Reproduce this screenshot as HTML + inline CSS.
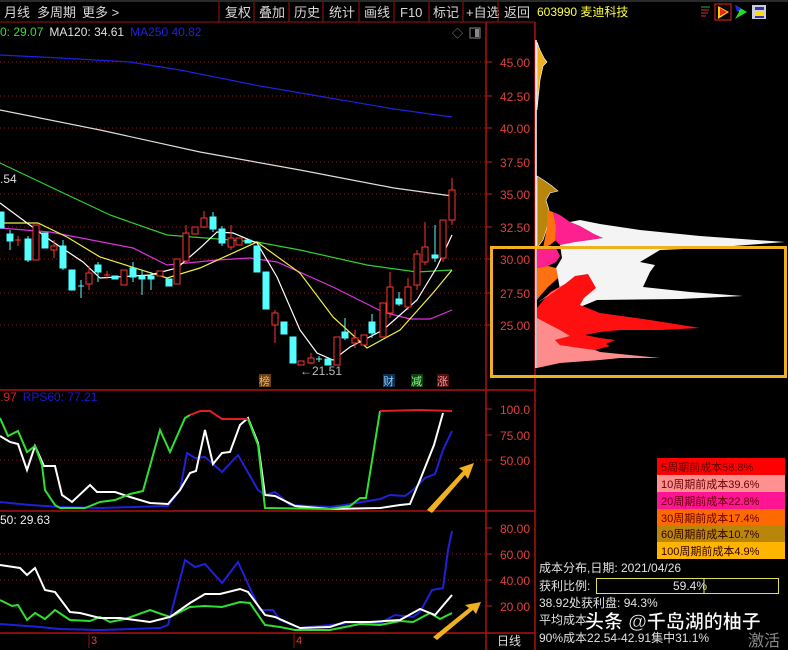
<!DOCTYPE html>
<html><head><meta charset="utf-8"><style>
body{margin:0;background:#000;width:788px;height:650px;overflow:hidden;font-family:"Liberation Sans","Noto Sans CJK SC",sans-serif}
svg{display:block}
text{font-family:"Liberation Sans","Noto Sans CJK SC",sans-serif}
</style></head><body>
<svg width="788" height="650" viewBox="0 0 788 650" xmlns="http://www.w3.org/2000/svg">
<rect width="788" height="650" fill="#000"/>
<line x1="0" y1="1" x2="788" y2="1" fill="none" stroke="#555"/>
<line x1="0" y1="22" x2="535" y2="22" stroke="#a01010"/>
<g fill="#d8d8d8" font-size="13">
<text x="4" y="17">月线</text><text x="37" y="17">多周期</text><text x="82" y="17">更多 &gt;</text>
<text x="225" y="17">复权</text><text x="259" y="17">叠加</text><text x="294" y="17">历史</text><text x="329" y="17">统计</text><text x="364" y="17">画线</text><text x="400" y="17">F10</text><text x="433" y="17">标记</text><text x="466" y="17">+自选</text><text x="504" y="17">返回</text>
</g>
<g stroke="#a01010"><line x1="219" y1="2" x2="219" y2="22"/><line x1="254" y1="2" x2="254" y2="22"/><line x1="289" y1="2" x2="289" y2="22"/><line x1="323" y1="2" x2="323" y2="22"/><line x1="359" y1="2" x2="359" y2="22"/><line x1="394" y1="2" x2="394" y2="22"/><line x1="429" y1="2" x2="429" y2="22"/><line x1="463" y1="2" x2="463" y2="22"/><line x1="498" y1="2" x2="498" y2="22"/></g>
<text x="537" y="16" fill="#ffff40" font-size="12">603990 麦迪科技</text>
<g><line x1="701" y1="7" x2="710" y2="7" stroke="#3a3"/><line x1="701" y1="10" x2="709" y2="10" stroke="#c33"/><line x1="701" y1="13" x2="708" y2="13" stroke="#c33"/><line x1="701" y1="16" x2="706" y2="16" stroke="#c33"/>
<rect x="715" y="4" width="16" height="16" fill="none" stroke="#e22"/><polygon points="718,6 729,12 718,19" fill="#ffd000"/><polygon points="720,8 727,12 720,16" fill="#e22"/>
<polygon points="735,5 747,12 735,19 739,12" fill="#22dd22"/><polygon points="735,5 741,9 737,12" fill="#22f"/>
<rect x="752" y="5" width="14" height="14" fill="#ccd"/><rect x="755" y="7" width="9" height="3" fill="#33a"/><rect x="755" y="12" width="9" height="3" fill="#fd0"/><rect x="755" y="16" width="9" height="2" fill="#33a"/></g>

<g stroke="#b01010" stroke-width="1.5">
<line x1="486" y1="22" x2="486" y2="650"/><line x1="535" y1="22" x2="535" y2="650"/>
<line x1="0" y1="390" x2="535" y2="390"/><line x1="0" y1="511" x2="535" y2="511"/><line x1="0" y1="633" x2="535" y2="633"/>
</g>
<g stroke="#901818" stroke-dasharray="1,3">
<line x1="0" y1="62" x2="486" y2="62"/><line x1="0" y1="96" x2="486" y2="96"/><line x1="0" y1="128" x2="486" y2="128"/><line x1="0" y1="162" x2="486" y2="162"/><line x1="0" y1="194" x2="486" y2="194"/><line x1="0" y1="227" x2="486" y2="227"/><line x1="0" y1="259" x2="486" y2="259"/><line x1="0" y1="293" x2="486" y2="293"/><line x1="0" y1="325" x2="486" y2="325"/>
<line x1="0" y1="460" x2="486" y2="460"/><line x1="0" y1="554" x2="486" y2="554"/><line x1="0" y1="580" x2="486" y2="580"/>
</g>
<g stroke="#c02020"><line x1="486" y1="62" x2="492" y2="62"/><line x1="486" y1="96" x2="492" y2="96"/><line x1="486" y1="128" x2="492" y2="128"/><line x1="486" y1="162" x2="492" y2="162"/><line x1="486" y1="194" x2="492" y2="194"/><line x1="486" y1="227" x2="492" y2="227"/><line x1="486" y1="259" x2="492" y2="259"/><line x1="486" y1="293" x2="492" y2="293"/><line x1="486" y1="325" x2="492" y2="325"/><line x1="486" y1="409" x2="492" y2="409"/><line x1="486" y1="435" x2="492" y2="435"/><line x1="486" y1="460" x2="492" y2="460"/><line x1="486" y1="528" x2="492" y2="528"/><line x1="486" y1="554" x2="492" y2="554"/><line x1="486" y1="580" x2="492" y2="580"/><line x1="486" y1="606" x2="492" y2="606"/></g>
<g fill="#e04040" font-size="12">
<text x="500" y="67">45.00</text><text x="500" y="101">42.50</text><text x="500" y="133">40.00</text><text x="500" y="167">37.50</text><text x="500" y="199">35.00</text><text x="500" y="232">32.50</text><text x="500" y="264">30.00</text><text x="500" y="298">27.50</text><text x="500" y="330">25.00</text>
<text x="500" y="414">100.0</text><text x="500" y="440">75.00</text><text x="500" y="465">50.00</text>
<text x="500" y="533">80.00</text><text x="500" y="559">60.00</text><text x="500" y="585">40.00</text><text x="500" y="611">20.00</text>
</g>
<text x="497" y="645" fill="#ddd" font-size="12">日线</text>
<g fill="#e04040" font-size="11"><text x="91" y="644">3</text><text x="296" y="644">4</text></g>
<g stroke="#a01010"><line x1="89" y1="633" x2="89" y2="648"/><line x1="294" y1="633" x2="294" y2="648"/></g>

<text x="0" y="36" font-size="12"><tspan fill="#3fd83f">0: 29.07</tspan><tspan fill="#e0e0e0" dx="6">MA120: 34.61</tspan><tspan fill="#2020e0" dx="6">MA250  40.82</tspan></text>
<text x="452" y="37" fill="#888" font-size="11">◇</text><rect x="470" y="28" width="10" height="10" fill="none" stroke="#888"/><rect x="475" y="29" width="4" height="8" fill="#888"/>
<text x="0" y="183" fill="#ddd" font-size="12">.54</text>
<text x="0" y="401" font-size="12"><tspan fill="#e02020">.97</tspan><tspan fill="#1a1ad0" dx="6">RPS60: 77.21</tspan></text>
<text x="0" y="524" fill="#eee" font-size="12">50: 29.63</text>

<g fill="none" stroke-width="1.2">
<polyline stroke="#2020e0" points="0,55 60,58 130,62 180,70 260,86 330,98 394,109 452,117"/>
<polyline stroke="#ddd" points="0,110 100,130 200,152 300,170 394,188 452,196"/>
<polyline stroke="#30d030" points="0,163 57,190 110,215 167,235 257,242 300,250 367,265 417,272 452,270"/>
<polyline stroke="#e030e0" points="0,228 50,232 133,248 167,265 217,260 250,258 277,262 333,287 383,312 410,319 430,319 452,310"/>
<polyline stroke="#f0f040" points="0,223 38,223 67,237 100,257 167,278 200,268 257,242 300,273 333,317 367,348 400,330 433,293 452,270"/>
<polyline stroke="#fff" points="0,203 50,240 83,262 100,278 150,275 177,268 200,248 217,232 233,233 257,243 277,277 300,330 317,353 333,360 350,347 383,330 417,300 437,267 452,235"/>
</g>
<g stroke-width="1">
<g stroke="#54ffff" fill="#54ffff">
<rect x="-2" y="212" width="6" height="16"/>
<line x1="10" y1="230" x2="10" y2="250"/><rect x="7" y="234" width="6" height="7"/>
<line x1="28" y1="236" x2="28" y2="262"/><rect x="25" y="239" width="6" height="21"/>
<rect x="42" y="233" width="6" height="15"/>
<line x1="63" y1="240" x2="63" y2="270"/><rect x="60" y="246" width="6" height="22"/>
<rect x="69" y="270" width="6" height="20"/>
<line x1="81" y1="280" x2="81" y2="298"/><line x1="78" y1="286" x2="84" y2="286"/>
<line x1="98" y1="262" x2="98" y2="282"/><rect x="95" y="265" width="6" height="7"/>
<rect x="112" y="276" width="6" height="3"/>
<line x1="133" y1="262" x2="133" y2="282"/><rect x="130" y="268" width="6" height="9"/>
<line x1="142" y1="270" x2="142" y2="295"/><rect x="139" y="276" width="6" height="3"/>
<line x1="151" y1="272" x2="151" y2="290"/><rect x="148" y="276" width="6" height="3"/>
<rect x="166" y="279" width="6" height="7"/>
<line x1="213" y1="212" x2="213" y2="232"/><rect x="210" y="217" width="6" height="12"/>
<line x1="222" y1="226" x2="222" y2="246"/><rect x="219" y="229" width="6" height="14"/>
<rect x="245" y="240" width="6" height="3"/>
<rect x="254" y="246" width="6" height="26"/>
<rect x="263" y="272" width="6" height="37"/>
<rect x="281" y="322" width="6" height="12"/>
<rect x="290" y="337" width="6" height="26"/>
<line x1="319" y1="356" x2="319" y2="362"/><line x1="316" y1="359" x2="322" y2="359"/>
<rect x="325" y="359" width="6" height="6"/>
<line x1="345" y1="318" x2="345" y2="340"/><rect x="342" y="332" width="6" height="6"/>
<line x1="372" y1="314" x2="372" y2="338"/><rect x="369" y="322" width="6" height="11"/>
<line x1="399" y1="292" x2="399" y2="306"/><rect x="396" y="299" width="6" height="5"/>
<line x1="435" y1="225" x2="435" y2="262"/><rect x="432" y="255" width="6" height="3"/>
</g>
<g stroke="#ff3232" fill="#000">
<line x1="18" y1="236" x2="18" y2="246"/><line x1="15" y1="240" x2="21" y2="240"/>
<rect x="33" y="225" width="6" height="35"/>
<line x1="54" y1="240" x2="54" y2="258"/><rect x="51" y="246" width="6" height="4"/>
<line x1="89" y1="266" x2="89" y2="290"/><rect x="86" y="273" width="6" height="11"/>
<line x1="107" y1="271" x2="107" y2="279"/><line x1="104" y1="275" x2="110" y2="275"/>
<rect x="121" y="270" width="6" height="15"/>
<rect x="157" y="271" width="6" height="5"/>
<rect x="174" y="259" width="6" height="25"/>
<line x1="186" y1="225" x2="186" y2="264"/><rect x="183" y="233" width="6" height="28"/>
<rect x="192" y="227" width="6" height="7"/>
<line x1="204" y1="211" x2="204" y2="228"/><rect x="201" y="218" width="6" height="9"/>
<line x1="231" y1="225" x2="231" y2="250"/><rect x="228" y="238" width="6" height="9"/>
<rect x="236" y="238" width="6" height="7"/>
<line x1="275" y1="310" x2="275" y2="343"/><rect x="272" y="313" width="6" height="12"/>
<rect x="298" y="361" width="6" height="4"/>
<line x1="311" y1="353" x2="311" y2="364"/><rect x="308" y="358" width="6" height="5"/>
<rect x="334" y="337" width="6" height="28"/>
<line x1="355" y1="330" x2="355" y2="348"/><rect x="352" y="338" width="6" height="5"/>
<rect x="361" y="335" width="6" height="10"/>
<rect x="380" y="303" width="6" height="34"/>
<line x1="390" y1="272" x2="390" y2="318"/><rect x="387" y="287" width="6" height="26"/>
<line x1="408" y1="278" x2="408" y2="310"/><rect x="405" y="287" width="6" height="20"/>
<line x1="417" y1="250" x2="417" y2="290"/><rect x="414" y="254" width="6" height="31"/>
<line x1="425" y1="222" x2="425" y2="265"/><rect x="422" y="247" width="6" height="15"/>
<line x1="443" y1="220" x2="443" y2="262"/><rect x="440" y="220" width="6" height="38"/>
<line x1="452" y1="178" x2="452" y2="225"/><rect x="449" y="190" width="6" height="30"/>
</g></g>
<text x="300" y="375" fill="#bbb" font-size="12">←21.51</text>
<g font-size="11"><rect x="259" y="374" width="12" height="13" fill="#6a4010"/><text x="259" y="385" fill="#f0b070">榜</text>
<rect x="383" y="374" width="12" height="13" fill="#103050"/><text x="383" y="385" fill="#8cf">财</text>
<rect x="411" y="374" width="12" height="13" fill="#104010"/><text x="411" y="385" fill="#8f8">减</text>
<rect x="437" y="374" width="12" height="13" fill="#501010"/><text x="437" y="385" fill="#f99">涨</text></g>

<g fill="none" stroke-width="2">
<polyline stroke="#2020d8" points="0,502 30,505 60,507 100,508 168,506 180,490 187,453 195,458 205,457 222,472 238,455 258,490 265,495 275,492 290,505 330,507 345,505 380,499 390,495 405,496 413,490 425,478 435,474 443,450 452,431"/>
<polyline stroke="#fff" points="0,436 10,442 18,444 27,470 35,446 44,466 55,466 62,495 72,502 90,485 97,492 115,492 130,497 150,503 168,504 180,490 190,473 196,471 205,430 213,464 222,453 230,452 240,425 248,418 258,443 265,495 275,496 295,506 330,509 380,508 400,505 410,504 420,480 434,445 443,413"/>
<polyline stroke="#30e030" points="0,418 8,436 18,431 27,452 35,446 42,465 45,490 55,505 60,508 85,508 100,502 115,500 130,494 143,491 160,430 170,452 185,418 190,415"/>
<polyline stroke="#30e030" points="248,419 258,445 265,508 330,509 350,506 360,498 366,498 380,411"/>
<polyline stroke="#e02020" points="190,415 200,411 210,411 222,419 248,419"/>
<polyline stroke="#e02020" points="380,411 420,410 452,411"/>
</g>
<g fill="none" stroke-width="2">
<polyline stroke="#2020d8" points="0,624 40,627 60,629 100,630 160,628 168,625 185,560 195,567 205,564 222,583 238,562 260,610 273,610 280,620 300,628 350,623 380,623 395,615 413,617 420,612 432,590 443,588 448,550 452,531"/>
<polyline stroke="#30e030" points="0,600 12,606 18,605 27,620 35,613 45,619 55,610 70,620 90,621 100,617 110,622 125,619 150,610 170,617 190,607 205,606 222,607 240,602 250,603 265,625 280,627 295,630 330,630 360,624 380,625 400,621 413,622 430,613 440,619 452,613"/>
<polyline stroke="#fff" points="0,565 20,568 27,575 35,568 45,590 55,592 70,612 80,613 100,618 120,618 150,622 170,617 190,603 205,594 220,594 240,589 248,592 265,615 275,617 300,628 330,627 345,622 370,622 400,620 420,609 435,615 452,595"/>
</g>
<g fill="#f0b020">
<polygon points="427,510 432,513 465,475 468,479 474,463 459,468 463,471"/>
<polygon points="433,637 437,640 473,610 476,614 481,602 465,605 469,608"/>
</g>

<!-- distribution -->
<line x1="536" y1="40" x2="536" y2="368" stroke="#fff" stroke-width="1.5"/>
<polygon points="537,42 540,50 544,58 547,62 543,66 540,80 537,110" fill="#f0b020" stroke="#fff" stroke-width="0.6"/>
<polygon points="537,176 545,181 552,186 558,191 550,193 546,200 549,210 547,228 543,240 537,248" fill="#b8860b" stroke="#fff" stroke-width="0.6"/>
<polygon points="547,210 553,212 556,225 556,240 550,245 543,248 547,228" fill="#ff7010"/>
<polygon points="553,212 560,215 570,222 580,226 594,234 603,238 590,240 575,242 560,245 555,240 556,225" fill="#ff2090"/>
<polygon points="570,222 580,220 600,224 640,230 700,236 785,242 707,248 660,250 640,262 655,265 650,272 643,287 690,292 743,296 680,299 597,300 580,307 570,300 560,290 558,278 556,268 562,258 560,245 575,242 590,240 603,238 594,234 580,226" fill="#f4f4f4"/>
<polygon points="537,248 545,246 556,248 560,256 556,262 548,266 537,268" fill="#ff2090"/>
<polygon points="537,268 548,266 556,268 558,278 548,287 540,296 537,300" fill="#ff7010"/>
<polygon points="537,308 550,292 565,284 575,276 588,274 596,288 584,298 580,305 600,313 650,320 700,328 660,330 620,330 600,332 585,335 600,338 615,340 606,344 610,346 595,350 580,348 560,345 555,340 570,336 560,330 537,318" fill="#ff1010"/>
<polygon points="537,318 560,330 570,336 555,340 560,345 580,348 595,350 600,352 660,358 620,358 600,360 560,363 537,368" fill="#ff8c8c"/>
<polygon points="537,303 552,292 565,284 548,296" fill="#ff8c8c"/>
<rect x="491.5" y="247.5" width="294" height="129" fill="none" stroke="#f0b020" stroke-width="3"/>

<g font-size="11">
<rect x="657" y="458" width="128" height="17" fill="#ff0000"/><text x="661" y="471" fill="#600">5周期前成本58.8%</text>
<rect x="657" y="475" width="128" height="17" fill="#ff9090"/><text x="661" y="488" fill="#600">10周期前成本39.6%</text>
<rect x="657" y="492" width="128" height="17" fill="#ff1493"/><text x="661" y="505" fill="#600">20周期前成本22.8%</text>
<rect x="657" y="509" width="128" height="16" fill="#ff6a00"/><text x="661" y="522" fill="#600">30周期前成本17.4%</text>
<rect x="657" y="525" width="128" height="17" fill="#b8860b"/><text x="661" y="538" fill="#300">60周期前成本10.7%</text>
<rect x="657" y="542" width="128" height="17" fill="#ffb400"/><text x="661" y="555" fill="#300">100周期前成本4.9%</text>
</g>
<g fill="#e0e0e0" font-size="12">
<text x="539" y="572">成本分布,日期: 2021/04/26</text>
<text x="539" y="590">获利比例:</text>
<text x="539" y="607">38.92处获利盘: 94.3%</text>
<text x="539" y="624">平均成本</text>
<text x="539" y="642">90%成本22.54-42.91集中31.1%</text>
</g>
<rect x="596.5" y="578.5" width="182" height="15" fill="none" stroke="#e0e050"/>
<line x1="704" y1="579" x2="704" y2="593" stroke="#e0e050"/>
<text x="673" y="590" fill="#e0e0e0" font-size="12">59.4%</text>
<text x="585" y="628" fill="#fff" font-size="19" font-weight="bold" stroke="#000" stroke-width="0.5">头条 @千岛湖的柚子</text>
<text x="748" y="646" fill="#888" font-size="16">激活</text>
</svg>
</body></html>
